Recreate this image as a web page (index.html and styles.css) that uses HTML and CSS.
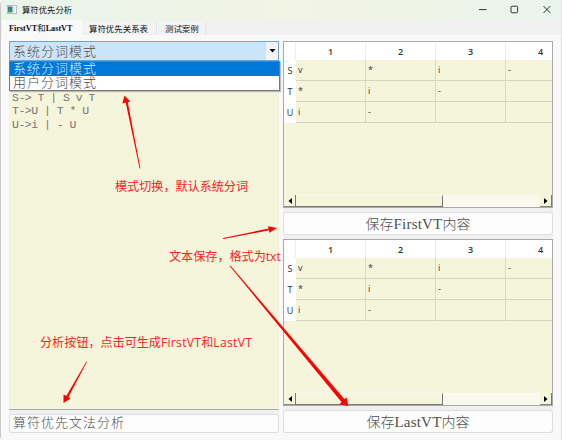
FILE: index.html
```html
<!DOCTYPE html>
<html lang="zh-CN">
<head>
<meta charset="utf-8">
<title>算符优先分析</title>
<link rel="stylesheet" href="styles.css">
</head>
<body>
<div class="window">
  <header class="titlebar">
    <svg class="app-icon" width="10" height="9" viewBox="0 0 10 9"><defs><linearGradient id="g" x2="0" y2="1"><stop stop-color="#3f6fa5"/><stop offset="1" stop-color="#3f9a72"/></linearGradient></defs><rect x=".5" y=".5" width="9" height="8" fill="#f8faf9" stroke="#b5bbb9"/><rect x="1" y="1.5" width="4.5" height="6" fill="url(#g)"/><path d="M7 2v5" stroke="#c6cbca"/></svg>
    <span class="title">算符优先分析</span>
    <svg class="controls" width="73" height="9" viewBox="0 0 73 9" fill="none" stroke="#333" stroke-width="1"><path d="M0 4.6h7.500"/><rect x="32" y="1.200" width="6.600" height="6.600" rx="1"/><path d="M64.500 1l6.800 7M71.300 1l-6.800 7"/></svg>
  </header>
  <nav class="tabs">
    <span class="tab active"><i class="tl">FirstVT</i>和<i class="tl">LastVT</i></span>
    <span class="tab second">算符优先关系表</span>
    <span class="tab third">测试案例</span>
  </nav>
  <main class="pane">
    <section class="left">
      <div class="combo"><span class="combo-text">系统分词模式</span><span class="drop"><svg width="7" height="4" viewBox="0 0 7 4"><path d="M.5 0h6L3.500 3.500z" fill="#000"/></svg></span>
        <div class="popup"><div class="option selected">系统分词模式</div><div class="option">用户分词模式</div></div>
      </div>
      <pre class="editor">S-&gt; T | S v T
T-&gt;U | T * U
U-&gt;i | - U</pre>
      <button class="btn analyze">算符优先文法分析</button>
    </section>
    <section class="right">
      <div class="table">
        <div class="grid">
          <b class="h"></b><b class="h">1</b><b class="h">2</b><b class="h">3</b><b class="h">4</b>
          <b class="r">S</b><span>v</span><span>*</span><span>i</span><span>-</span>
          <b class="r">T</b><span>*</span><span>i</span><span>-</span><span></span>
          <b class="r">U</b><span>i</span><span>-</span><span></span><span></span>
        </div>
        <div class="scroll"><span class="arrow"><svg width="4" height="6" viewBox="0 0 4 6"><path d="M4 0v6L.5 3z"/></svg></span><span class="thumb"></span><span class="track"></span><span class="arrow end"><svg width="4" height="6" viewBox="0 0 4 6"><path d="M0 0v6l3.500-3z"/></svg></span></div>
      </div>
      <button class="btn save">保存<i class="bl">FirstVT</i>内容</button>
      <div class="table">
        <div class="grid">
          <b class="h"></b><b class="h">1</b><b class="h">2</b><b class="h">3</b><b class="h">4</b>
          <b class="r">S</b><span>v</span><span>*</span><span>i</span><span>-</span>
          <b class="r">T</b><span>*</span><span>i</span><span>-</span><span></span>
          <b class="r">U</b><span>i</span><span>-</span><span></span><span></span>
        </div>
        <div class="scroll"><span class="arrow"><svg width="4" height="6" viewBox="0 0 4 6"><path d="M4 0v6L.5 3z"/></svg></span><span class="thumb"></span><span class="track"></span><span class="arrow end"><svg width="4" height="6" viewBox="0 0 4 6"><path d="M0 0v6l3.500-3z"/></svg></span></div>
      </div>
      <button class="btn save">保存<i class="bl">LastVT</i>内容</button>
    </section>
  </main>
  <svg class="arrows" width="562" height="440" viewBox="0 0 562 440" fill="#f00">
    <path d="M139.600 168.500L125.700 102.500L122.300 103.500L124.500 95.500L130.200 101.500L127.800 102.200L140.400 168.300z"/>
    <path d="M223 238L268.500 228.600L268 226.200L277 228L269.500 232.800L269 230.300L223.200 239z"/>
    <path d="M229.600 266L341.500 402L339.500 404.200L348.200 406L346.500 397.200L344.500 399.200L230.300 265.500z"/>
    <path d="M86.400 361.500L66.300 396L63.500 394.500L63.500 403L70.500 398.500L68.300 397.200L87 361.800z"/>
  </svg>
  <div class="note mode">模式切换，默认系统分词</div>
  <div class="note txt">文本保存，格式为<i class="nl">txt</i></div>
  <div class="note gen">分析按钮，点击可生成<i class="nl wide">FirstVT</i>和<i class="nl wide">LastVT</i></div>
</div>
</body>
</html>
```
FILE: styles.css
```css
* { box-sizing: border-box; }
body { margin: 0; font-family: "Noto Sans CJK SC", sans-serif; }
i { font-style: normal; }
.window { position: relative; width: 562px; height: 440px; background: #f0f0f0; overflow: hidden; display: flex; flex-direction: column; border-left: 1px solid #c9c9c9; border-right: 1px solid #e2e2e2; border-radius: 5px 0 0 4px; }
.titlebar { height: 20px; flex: none; display: flex; align-items: center; padding: 0 9px 2px 6px; background: linear-gradient(90deg, #e9f4eb, #f2f4e4 50%, #f0f4e5 70%, #eaf4ef); }
.title { font-size: 8.4px; line-height: 12px; margin-left: 5px; color: #111; flex: 1; }
.tabs { height: 15px; flex: none; display: flex; align-items: flex-end; font-size: 8.45px; line-height: 12px; color: #111; padding-left: 1px; }
.tab { height: 13px; padding-left: 7px; background: #f3f3f3; border-right: 1px solid #e5e5e5; white-space: nowrap; }
.tab.active { width: 80px; height: 15px; padding-top: 1px; background: #f9f9f9; border: 0; }
.second { width: 75px; }
.third { width: 49px; padding-left: 8px; }
.tl { font-family: "Liberation Serif", serif; font-weight: bold; font-size: 8.2px; letter-spacing: 0; }
.pane { flex: 1; display: flex; align-items: flex-start; gap: 4px; background: #f9f9f9; padding: 6px 7px 7px 8px; }
.left, .right { width: 270px; flex: none; display: flex; flex-direction: column; background: #f0f0f0; }
.combo { position: relative; height: 20px; flex: none; background: #cce4f7; border: 1px solid #69a5d5; display: flex; justify-content: space-between; color: #4c4c4c; font-size: 13px; letter-spacing: 1px; line-height: 17px; font-weight: 300; }
.combo-text { padding-left: 3px; }
.drop { width: 12px; background: #f3f3f3; display: flex; align-items: center; justify-content: center; }
.popup { position: absolute; z-index: 2; left: -1px; top: 19px; width: 271px; height: 30px; background: #fff; border: 1px solid #777; box-shadow: 1px 1px 1px #8888; }
.option { height: 14px; line-height: 12px; padding-left: 3px; }
.selected { background: #0078d7; color: #d9ebff; }
.editor { margin: 0; height: 349px; flex: none; background: #f5f5dc; border-bottom: 1px solid #aaa; padding: 30px 0 0 3px; font: 11.5px/13.3px "Liberation Mono", monospace; letter-spacing: -.52px; color: #777; }
.btn { border: 1px solid #dedede; border-radius: 3px; background: #fdfdfd; color: #505050; padding: 0; font-family: "Noto Sans CJK SC", sans-serif; font-size: 14px; font-weight: 300; flex: none; white-space: nowrap; }
.analyze { height: 19px; margin-top: 4px; text-align: left; padding: 0 0 3px 3px; line-height: 14px; font-size: 13px; letter-spacing: 1px; }
.bl { font-family: "Liberation Serif", serif; font-size: 15px; letter-spacing: .2px; }
.save { height: 23px; line-height: 20px; margin: 4px 0; }
.save:last-child { margin-bottom: 0; }
.table { height: 167px; flex: none; border: 1px solid #a9a9ac; background: #f5f5dc; display: flex; flex-direction: column; justify-content: space-between; overflow: hidden; }
.grid { display: grid; grid-template-columns: 12px 70px 70px 70px 70px; grid-template-rows: 18px 21px 21px 21px; font-family: "Open Sans", sans-serif; font-size: 9px; color: #333; }
.grid b { font-weight: 400; background: #fff; text-align: center; }
.h { line-height: 19px; border-right: 1px solid #eee; }
.grid .h { font-weight: 600; }
.r { line-height: 22px; }
.grid span { line-height: 20px; padding-left: 2px; border-right: 1px solid #d9d9c5; border-bottom: 1px solid #d4d4c0; }
.scroll { height: 12px; display: flex; background: #f9f9ed; }
.arrow { width: 12px; background: #f5f5dc; border-right: 1px solid #777; border-bottom: 1px solid #888; display: flex; align-items: center; justify-content: center; }
.thumb { width: 147px; background: #f5f5dc; border-right: 1px solid #777; border-bottom: 1px solid #777; border-top: 1px solid #fafaf0; }
.track { flex: 1; }
.arrows { position: absolute; left: -1px; top: 0; z-index: 3; }
.note { position: absolute; z-index: 4; color: #f22; font-size: 12.1px; line-height: 18px; white-space: nowrap; }
.nl { font-family: "Open Sans", sans-serif; font-size: 12.1px; }
.wide { letter-spacing: .3px; }
.mode { left: 114px; top: 177px; }
.txt { left: 168px; top: 247px; }
.gen { left: 39px; top: 333px; }
```
